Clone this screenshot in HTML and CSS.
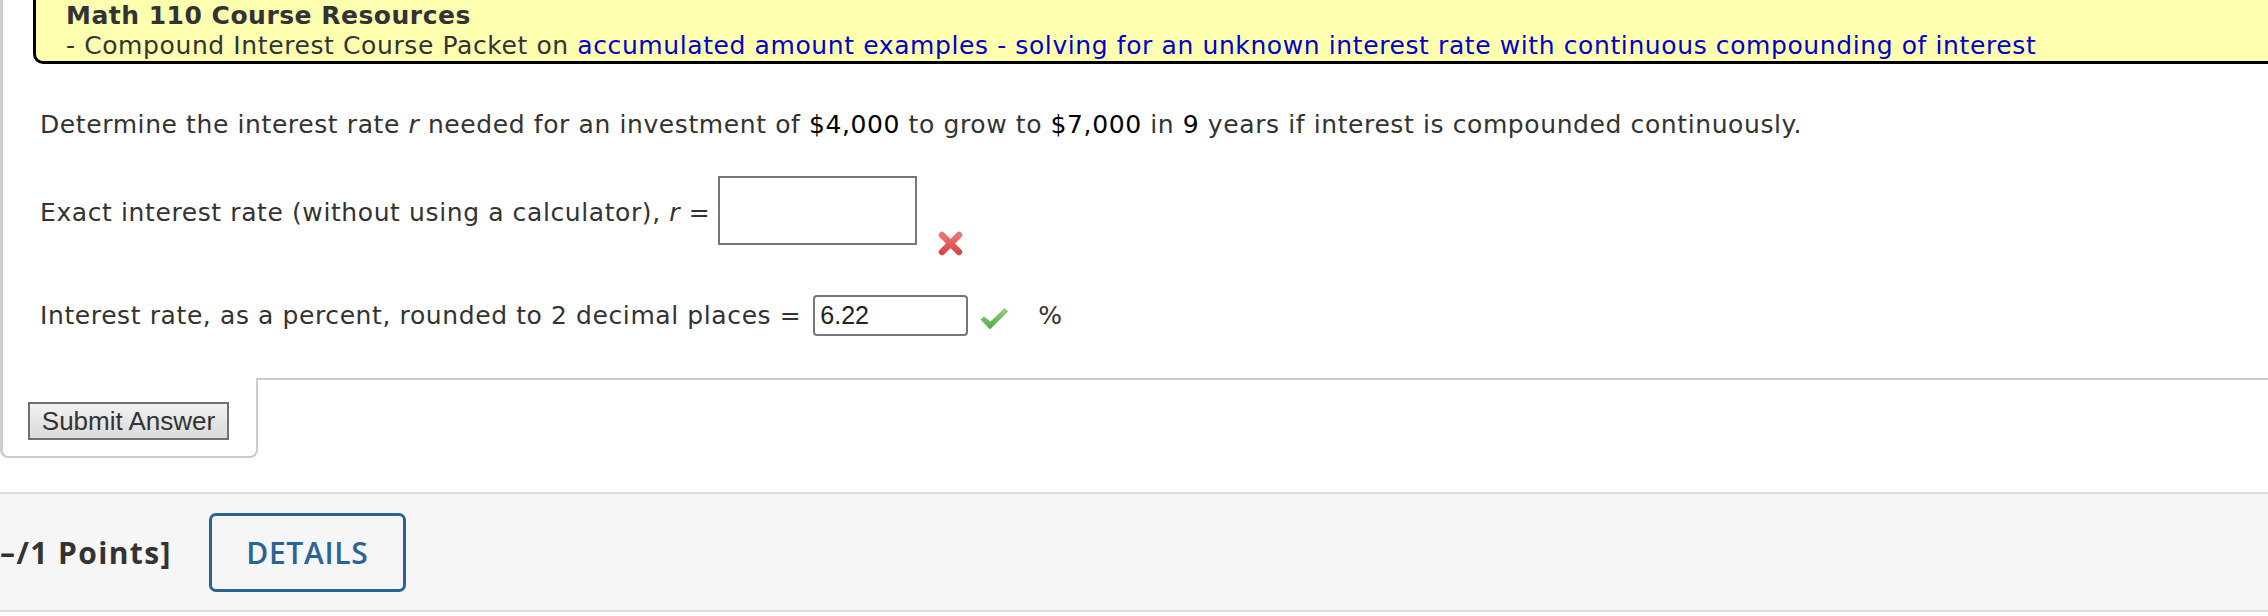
FILE: index.html
```html
<!DOCTYPE html>
<html lang="en">
<head>
<meta charset="utf-8">
<title>Compound Interest Question</title>
<link rel="stylesheet" href="styles.css">
</head>
<body>
<div class="question">
  <div class="resources">
    <div class="resources-title">Math 110 Course Resources</div>
    <div class="resources-line">- Compound Interest Course Packet on <a href="#">accumulated amount examples - solving for an unknown interest rate with continuous compounding of interest</a></div>
  </div>
  <div class="qbody">
    <p class="prompt">Determine the interest rate <i>r</i> needed for an investment of <span class="num">$4,000</span> to grow to <span class="num">$7,000</span> in <span class="num">9</span> years if interest is compounded continuously.</p>
    <div class="row row-exact">
      <span class="label label-exact">Exact interest rate (without using a calculator), <i>r</i> =</span>
      <span class="answer-box"></span>
      <svg class="xmark" viewBox="0 0 27 27" width="27" height="27" aria-hidden="true">
        <defs>
          <linearGradient id="xg" x1="0" y1="0" x2="0" y2="1">
            <stop offset="0" stop-color="#ee7474"/>
            <stop offset="1" stop-color="#d94848"/>
          </linearGradient>
        </defs>
        <path d="M5 5 L22 22 M22 5 L5 22" stroke="url(#xg)" stroke-width="6.5" stroke-linecap="round" fill="none"/>
      </svg>
    </div>
    <div class="row row-percent">
      <span class="label">Interest rate, as a percent, rounded to 2 decimal places =</span>
      <span class="answer-input">6.22</span>
      <svg class="check" viewBox="0 0 30 24" width="30" height="24" aria-hidden="true">
        <defs>
          <linearGradient id="cg" x1="0" y1="0" x2="0" y2="1">
            <stop offset="0" stop-color="#94d47e"/>
            <stop offset="1" stop-color="#58a646"/>
          </linearGradient>
        </defs>
        <path d="M1.5 13.5 L5 10.5 L11.5 15.5 L25.5 2 L29 5.5 L12 22.5 Q11 23.5 10 22.6 Z" fill="url(#cg)"/>
      </svg>
      <span class="unit">%</span>
    </div>
  </div>
</div>
<div class="actions">
  <div class="tab"><button class="submit" type="button">Submit Answer</button></div>
  <div class="rest"></div>
</div>
<div class="next">
  <span class="points">–/1 Points]</span>
  <button class="details" type="button">DETAILS</button>
</div>
</body>
</html>
```
FILE: styles.css
```css
html, body {
  margin: 0;
  padding: 0;
  background: #fff;
}
body {
  width: 2268px;
  overflow: hidden;
  font-family: "DejaVu Sans", Verdana, sans-serif;
  color: #333;
}
.question {
  border-left: 3px solid #ccc;
}
.resources {
  margin-left: 30px;
  background: #ffffb0;
  border-left: 3px solid #000;
  border-bottom: 3px solid #000;
  border-bottom-left-radius: 10px;
  padding: 1px 0 0 30px;
  font-size: 25px;
  letter-spacing: 0.6px;
  line-height: 30px;
  color: #333;
}
.resources-title {
  font-weight: bold;
  letter-spacing: 0.5px;
}
.resources a {
  color: #0000cc;
  text-decoration: none;
}
.qbody {
  padding: 46px 0 42px 37px;
}
.prompt {
  margin: 0;
  font-size: 25px;
  letter-spacing: 0.6px;
  line-height: 30px;
}
.num {
  color: #000;
}
.row {
  display: flex;
  align-items: center;
  font-size: 25px;
  letter-spacing: 0.6px;
  line-height: 30px;
}
.row-exact {
  margin-top: 36px;
}
.label-exact {
  padding-top: 4px;
}
.answer-box {
  box-sizing: border-box;
  width: 199px;
  height: 69px;
  margin-left: 8px;
  border: 2px solid #777;
  background: #fff;
}
.xmark {
  align-self: flex-end;
  margin: 0 0 -12px 20px;
}
.row-percent {
  margin-top: 50px;
}
.answer-input {
  box-sizing: border-box;
  width: 155px;
  height: 41px;
  margin-left: 12px;
  padding: 0 5px;
  border: 2px solid #777;
  border-radius: 4px;
  font-family: "Liberation Sans", Arial, sans-serif;
  font-size: 25px;
  letter-spacing: 0;
  line-height: 37px;
  color: #222;
  background: #fff;
}
.check {
  margin: 5px 0 0 11px;
}
.unit {
  margin-left: 29px;
}
.actions {
  display: flex;
}
.tab {
  box-sizing: border-box;
  width: 258px;
  padding: 24px 0 16px 25px;
  border-left: 3px solid #ccc;
  border-right: 2px solid #ccc;
  border-bottom: 2px solid #ccc;
  border-bottom-left-radius: 8px;
  border-bottom-right-radius: 8px;
}
.rest {
  flex: 1;
  border-top: 2px solid #ccc;
}
.submit {
  box-sizing: border-box;
  width: 201px;
  height: 38px;
  padding: 0;
  border: 2px solid #707070;
  background: linear-gradient(#f2f2f2, #dadada);
  font-family: "Liberation Sans", Arial, sans-serif;
  font-size: 26px;
  color: #333;
}
.next {
  display: flex;
  align-items: center;
  height: 116px;
  margin-top: 34px;
  border-top: 2px solid #ddd;
  border-bottom: 2px solid #ddd;
  background: #f6f6f6;
}
.points {
  font-family: "Open Sans", sans-serif;
  font-weight: 700;
  font-size: 30px;
  letter-spacing: 1.4px;
  color: #333;
}
.details {
  box-sizing: border-box;
  width: 197px;
  height: 79px;
  margin-left: 37px;
  padding: 0;
  border: 3px solid #2a6496;
  border-radius: 7px;
  background: transparent;
  font-family: "Open Sans", sans-serif;
  font-weight: 600;
  font-size: 30px;
  letter-spacing: 0.7px;
  color: #2a6496;
}
```
